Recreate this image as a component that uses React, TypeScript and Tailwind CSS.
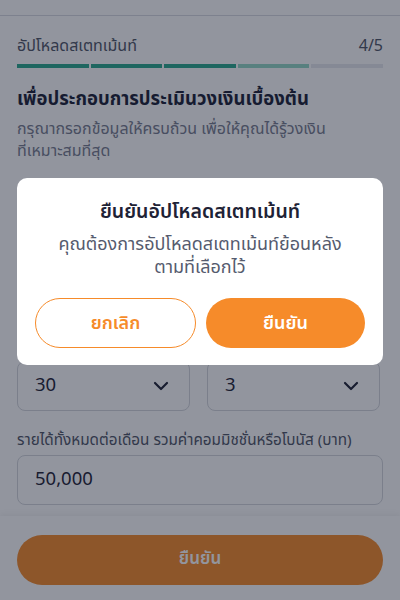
import React from "react";
import { ChevronDown } from "lucide-react";

export default function App() {
  return (
    <div
      className="relative w-[400px] h-[600px] overflow-hidden bg-white flex flex-col"
      style={{ fontFamily: '"Noto Sans Thai", "Noto Sans", "Liberation Sans", sans-serif' }}
    >
      <div className="h-[16px] shrink-0 border-b border-[#d9dbe1]" />
      <div className="flex-1 px-[17px] pt-[19px]">
        <div className="flex items-center justify-between h-[22px]">
          <span className="text-[16px] text-[#4f5566]">อัปโหลดสเตทเม้นท์</span>
          <span className="text-[16px] text-[#4f5566]">4/5</span>
        </div>
        <div className="mt-[7px] flex gap-[2px]">
          <div className="h-[4px] flex-1 bg-[#2aa88c]" />
          <div className="h-[4px] flex-1 bg-[#2aa88c]" />
          <div className="h-[4px] flex-1 bg-[#2aa88c]" />
          <div className="h-[4px] flex-1 bg-[#95d9c6]" />
          <div className="h-[4px] flex-1 bg-[#e7e9ee]" />
        </div>
        <h1 className="mt-[17px] text-[18.5px] font-bold leading-[28px] text-[#1a1f36]">
          เพื่อประกอบการประเมินวงเงินเบื้องต้น
        </h1>
        <p className="mt-[5px] text-[16px] leading-[22px] text-[#777c8e]">
          กรุณากรอกข้อมูลให้ครบถ้วน เพื่อให้คุณได้รู้วงเงิน
          <br />
          ที่เหมาะสมที่สุด
        </p>
        <div className="mt-[16px] h-[22px]" />
        <div className="mt-[8px] h-[50px] rounded-[8px] border border-[#d4d7dd]" />
        <div className="mt-[73px] h-[22px]" />
        <div className="mt-[8px] flex gap-[17px] pr-[3px]">
          <div className="flex-1 h-[50px] rounded-[8px] border border-[#d4d7dd] flex items-center justify-between pl-[17px] pr-[16px]">
            <span className="text-[18.5px] text-[#1e2235]">30</span>
            <ChevronDown size={24} strokeWidth={2.2} color="#1e2235" />
          </div>
          <div className="flex-1 h-[50px] rounded-[8px] border border-[#d4d7dd] flex items-center justify-between pl-[17px] pr-[16px]">
            <span className="text-[18.5px] text-[#1e2235]">3</span>
            <ChevronDown size={24} strokeWidth={2.2} color="#1e2235" />
          </div>
        </div>
        <div className="mt-[19px] text-[15.3px] leading-[22px] text-[#4f5566]">
          รายได้ทั้งหมดต่อเดือน รวมค่าคอมมิชชั่นหรือโบนัส (บาท)
        </div>
        <div className="mt-[3px] h-[50px] rounded-[8px] border border-[#d4d7dd] flex items-center pl-[17px]">
          <span className="text-[18.5px] text-[#1e2235]">50,000</span>
        </div>
      </div>
      <div className="shrink-0 h-[84px] bg-white shadow-[0_-2px_6px_rgba(0,0,0,0.06)] px-[17px] pt-[19px]">
        <button className="w-full h-[50px] rounded-full bg-[#f68b2a] text-white text-[17px] font-semibold">
          ยืนยัน
        </button>
      </div>

      <div className="absolute inset-0 bg-[rgba(18,24,44,0.46)] flex justify-center px-[17px] pt-[178px]">
        <div className="w-full h-[187px] bg-white rounded-[10px] pt-[20px] pb-[17px] px-[18px] flex flex-col items-center">
          <div className="text-[19.5px] font-semibold leading-[28px] text-[#1e2235]">ยืนยันอัปโหลดสเตทเม้นท์</div>
          <div className="mt-[7px] text-[18px] leading-[23px] text-[#555b6e] text-center">
            คุณต้องการอัปโหลดสเตทเม้นท์ย้อนหลัง
            <br />
            ตามที่เลือกไว้
          </div>
          <div className="mt-auto w-full flex gap-[10px]">
            <button className="flex-1 h-[50px] rounded-full border border-[#f68b2a] bg-white text-[#f68b2a] text-[18px] font-semibold">
              ยกเลิก
            </button>
            <button className="flex-1 h-[50px] rounded-full bg-[#f68b2a] text-white text-[18px] font-semibold">
              ยืนยัน
            </button>
          </div>
        </div>
      </div>
    </div>
  );
}
